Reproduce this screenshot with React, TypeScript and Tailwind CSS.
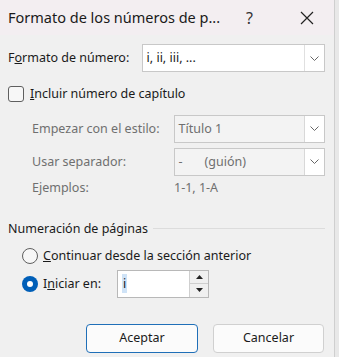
import React from "react";

const Chevron = () => (
  <svg width="9" height="5" viewBox="0 0 9 5" fill="none">
    <path d="M0.5 0.5 L4.5 4.5 L8.5 0.5" stroke="#666" strokeWidth="1" />
  </svg>
);

function Select({ text, disabled, className }: { text: React.ReactNode; disabled?: boolean; className: string }) {
  return (
    <div className={`flex h-[28px] items-stretch border ${disabled ? "border-[#c8c8c8] bg-[#f3f3f3] text-[#6f6f6f]" : "border-[#c8c8c8] bg-white text-[#1a1a1a]"} ${className}`}>
      <div className="flex flex-1 items-center pl-[4px]">{text}</div>
      <div className={`flex w-[20px] items-center justify-center border-l ${disabled ? "border-[#d8d8d8] bg-white" : "border-[#e0e0e0] bg-white"}`}>
        <Chevron />
      </div>
    </div>
  );
}

export default function App() {
  return (
    <div
      className="flex h-[357px] w-[339px] bg-[#e8e8e8] text-[12.5px] text-[#1a1a1a]"
      style={{ fontFamily: '"Noto Sans", "Open Sans", sans-serif' }}
    >
      <div className="flex w-[335px] flex-col border-r border-[#cfcfcf] bg-[#f0f0f0]">
        {/* title bar */}
        <div className="flex h-[35px] items-center bg-[#f3eef1] pl-[8px] text-[14.5px]">
          <span className="w-[232px]">Formato de los números de p...</span>
          <span className="w-[60px] pl-[6px] text-[16px] text-[#333]">?</span>
          <svg width="14" height="14" viewBox="0 0 14 14">
            <path d="M1 1 L13 13 M13 1 L1 13" stroke="#222" strokeWidth="1.2" />
          </svg>
        </div>

        <div className="flex flex-col pl-[8px] pr-[9px] leading-[19.5px]">
          {/* Formato de número */}
          <div className="mt-[9px] flex items-center">
            <span className="w-[134px]">
              F<span className="underline">o</span>rmato de número:
            </span>
            <Select text="i, ii, iii, ..." className="w-[184px]" />
          </div>

          {/* checkbox */}
          <div className="mt-[12px] flex items-center">
            <div className="h-[16px] w-[16px] rounded-[3px] border border-[#5f5f5f] bg-[#f7f7f7]" />
            <span className="ml-[6px]">
              <span className="underline">I</span>ncluir número de capítulo
            </span>
          </div>

          {/* disabled block */}
          <div className="mt-[11px] flex items-center pl-[24px] text-[#6f6f6f]">
            <span className="w-[142px]">Empezar con el estilo:</span>
            <Select text="Título 1" disabled className="w-[152px]" />
          </div>
          <div className="mt-[5px] flex items-center pl-[24px] text-[#6f6f6f]">
            <span className="w-[142px]">Usar separador:</span>
            <Select
              text={
                <span>
                  -<span className="ml-[22px]">(guión)</span>
                </span>
              }
              disabled
              className="w-[152px]"
            />
          </div>
          <div className="mt-[2px] flex h-[20px] items-center pl-[24px] text-[#6f6f6f]">
            <span className="w-[142px]">Ejemplos:</span>
            <span>1-1, 1-A</span>
          </div>

          {/* section */}
          <div className="mt-[21px] flex items-center">
            <span>Numeración de páginas</span>
            <div className="ml-[5px] h-px flex-1 bg-[#dcdcdc]" />
          </div>

          <div className="mt-[8px] flex items-center pl-[14px]">
            <div className="h-[16px] w-[16px] rounded-full border border-[#5f5f5f] bg-[#f7f7f7]" />
            <span className="ml-[5px]">
              <span className="underline">C</span>ontinuar desde la sección anterior
            </span>
          </div>

          <div className="mt-[4px] flex items-center pl-[14px]">
            <div className="flex h-[16px] w-[16px] items-center justify-center rounded-full bg-[#005fb8]">
              <div className="h-[6px] w-[6px] rounded-full bg-white" />
            </div>
            <span className="ml-[5px] w-[74px]">
              I<span className="underline">n</span>iciar en:
            </span>
            <div className="flex h-[28px] w-[92px] items-stretch border border-[#b8b8b8] bg-white">
              <div className="flex flex-1 items-center pl-[4px]">
                <span className="bg-[#cfe3f7] px-px">i</span>
              </div>
              <div className="flex w-[19px] flex-col border-l border-[#cfcfcf]">
                <div className="flex flex-1 items-center justify-center border-b border-[#cfcfcf] bg-[#f0f0f0]">
                  <svg width="7" height="4" viewBox="0 0 7 4">
                    <path d="M0 4 L3.5 0 L7 4 Z" fill="#222" />
                  </svg>
                </div>
                <div className="flex flex-1 items-center justify-center bg-[#f0f0f0]">
                  <svg width="7" height="4" viewBox="0 0 7 4">
                    <path d="M0 0 L3.5 4 L7 0 Z" fill="#222" />
                  </svg>
                </div>
              </div>
            </div>
          </div>

          {/* buttons */}
          <div className="mt-[26px] flex justify-end gap-[15px] pr-[1px]">
            <button className="h-[29px] w-[112px] rounded-[4px] border border-[#1f6fb8] bg-[#fbfbfb] text-[12.5px]">
              Aceptar
            </button>
            <button className="h-[29px] w-[111px] rounded-[4px] border border-[#d0d0d0] bg-[#fbfbfb] text-[12.5px]">
              Cancelar
            </button>
          </div>
        </div>
      </div>
    </div>
  );
}
